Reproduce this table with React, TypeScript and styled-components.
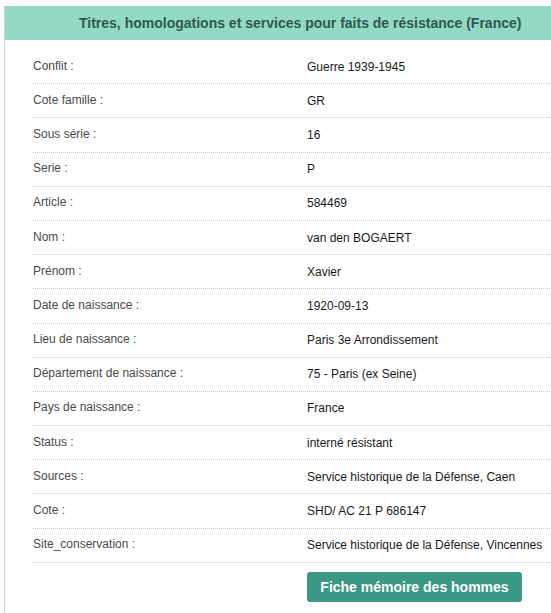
import React from "react";
import styled, { createGlobalStyle } from "styled-components";

const Global = createGlobalStyle`
  html, body { margin: 0; padding: 0; background: #fff; }
  body { font-family: "Liberation Sans", Arial, sans-serif; overflow: hidden; }
`;

const Panel = styled.section`
  margin: 6px 0 0 4px;
  border-left: 1px solid #d4d4d4;
  width: 547px;
  min-height: 607px;
`;

const Header = styled.h2`
  margin: 0;
  height: 34px;
  background: #94d8c6;
  color: #2d5a52;
  font-size: 14px;
  font-weight: bold;
  line-height: 34px;
  padding-left: 74px;
  white-space: nowrap;
`;

const Body = styled.div`
  padding: 10px 0 0 28px;
`;

const Row = styled.div`
  display: grid;
  grid-template-columns: 274px 1fr;
  height: 34.2px;
  align-items: center;
  border-bottom: 1px dotted #c8c8c8;
  box-sizing: border-box;
  font-size: 12px;
`;

const Label = styled.span`
  color: #4a4a4a;
  position: relative;
  top: -1px;
`;

const Value = styled.span`
  color: #1a1a1a;
  white-space: nowrap;
`;

const Actions = styled.div`
  padding: 9px 0 0 274px;
`;

const Button = styled.a`
  display: inline-flex;
  align-items: center;
  justify-content: center;
  width: 215px;
  height: 30px;
  background: #3a9884;
  color: #fff;
  font-weight: bold;
  font-size: 14px;
  border-radius: 3px;
  text-decoration: none;
`;

const rows: [string, string][] = [
  ["Conflit :", "Guerre 1939-1945"],
  ["Cote famille :", "GR"],
  ["Sous série :", "16"],
  ["Serie :", "P"],
  ["Article :", "584469"],
  ["Nom :", "van den BOGAERT"],
  ["Prénom :", "Xavier"],
  ["Date de naissance :", "1920-09-13"],
  ["Lieu de naissance :", "Paris 3e Arrondissement"],
  ["Département de naissance :", "75 - Paris (ex Seine)"],
  ["Pays de naissance :", "France"],
  ["Status :", "interné résistant"],
  ["Sources :", "Service historique de la Défense, Caen"],
  ["Cote :", "SHD/ AC 21 P 686147"],
  ["Site_conservation :", "Service historique de la Défense, Vincennes"],
];

export default function App() {
  return (
    <>
      <Global />
      <Panel>
        <Header>Titres, homologations et services pour faits de résistance (France)</Header>
        <Body>
          {rows.map(([l, v]) => (
            <Row key={l}>
              <Label>{l}</Label>
              <Value>{v}</Value>
            </Row>
          ))}
          <Actions>
            <Button href="#">Fiche mémoire des hommes</Button>
          </Actions>
        </Body>
      </Panel>
    </>
  );
}
